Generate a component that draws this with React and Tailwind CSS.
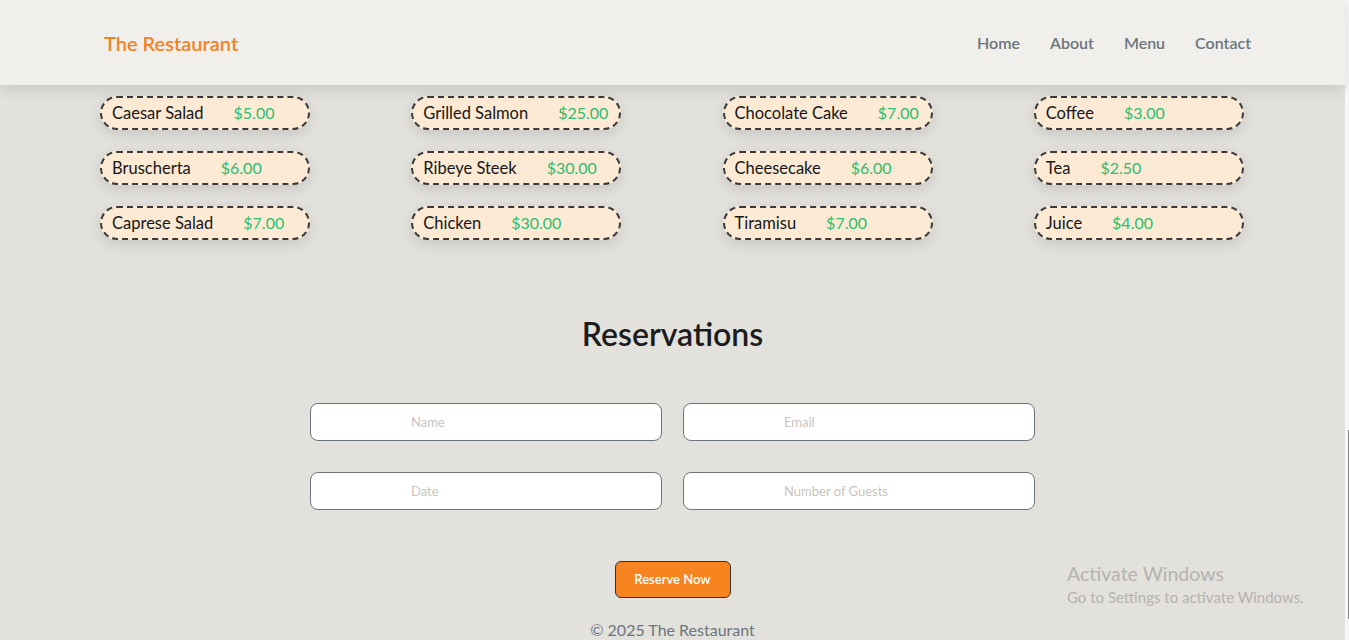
const menu = [
  [
    { name: 'Caesar Salad', price: '$5.00' },
    { name: 'Bruscherta', price: '$6.00' },
    { name: 'Caprese Salad', price: '$7.00' },
  ],
  [
    { name: 'Grilled Salmon', price: '$25.00' },
    { name: 'Ribeye Steek', price: '$30.00' },
    { name: 'Chicken', price: '$30.00' },
  ],
  [
    { name: 'Chocolate Cake', price: '$7.00' },
    { name: 'Cheesecake', price: '$6.00' },
    { name: 'Tiramisu', price: '$7.00' },
  ],
  [
    { name: 'Coffee', price: '$3.00' },
    { name: 'Tea', price: '$2.50' },
    { name: 'Juice', price: '$4.00' },
  ],
];

function MenuPill({ item }) {
  return (
    <div className="flex h-[34px] w-[210px] items-center rounded-full border-2 border-dashed border-[#3a3a3a] bg-[#fcead4] pl-[10px] shadow-[0_4px_14px_rgba(0,0,0,0.12)]">
      <span className="text-[16.5px] text-[#161616]">{item.name}</span>
      <span className="ml-[30px] text-[16px] text-[#2dbd6e]">{item.price}</span>
    </div>
  );
}

export default function App() {
  return (
    <div className="relative h-[640px] w-full overflow-hidden bg-[#e2e1dc] font-['Lato',sans-serif] pr-[4px]">
      <header className="relative z-10 flex h-[85px] items-center justify-between bg-[#f0efeb] pl-[104px] pr-[94px] shadow-[0_4px_14px_rgba(0,0,0,0.12)]">
        <span className="text-[20px] font-semibold text-[#f5821f]">The Restaurant</span>
        <nav className="flex gap-[30px] text-[16px] font-semibold text-[#6c757d]">
          <a>Home</a>
          <a>About</a>
          <a>Menu</a>
          <a>Contact</a>
        </nav>
      </header>

      <section className="mt-[11px] grid grid-cols-4 pl-[100px]">
        {menu.map((col, i) => (
          <div key={i} className="flex flex-col gap-[21px]">
            {col.map((item) => (
              <MenuPill key={item.name} item={item} />
            ))}
          </div>
        ))}
      </section>

      <section className="mt-[74px] flex flex-col items-center">
        <h2 className="text-[32px] leading-[40px] font-semibold text-[#1c1c1c]">Reservations</h2>
        <form className="mt-[49px] grid w-[725px] grid-cols-2 gap-x-[21px] gap-y-[31px]">
          {['Name', 'Email', 'Date', 'Number of Guests'].map((p) => (
            <input
              key={p}
              placeholder={p}
              className="h-[38px] rounded-[8px] border border-[#6c757d] bg-white pl-[100px] text-[13px] outline-none placeholder:text-[#c8c4c0]"
            />
          ))}
        </form>
        <button className="mt-[51px] h-[37px] w-[116px] rounded-[6px] border border-[#333] bg-[#f7851f] text-[13px] font-semibold text-white">
          Reserve Now
        </button>
        <footer className="mt-[20px] text-[16px] leading-[24px] text-[#6c757d]">© 2025 The Restaurant</footer>
      </section>

      <div className="absolute left-[1067px] top-[562px] flex flex-col text-[#b5b3af]">
        <span className="text-[19.5px] leading-[24px]">Activate Windows</span>
        <span className="text-[15px] leading-[22px]">Go to Settings to activate Windows.</span>
      </div>

      <div className="absolute right-0 top-0 h-full w-[4px] bg-[#f7f7f7]">
        <div className="ml-[3px] mt-[430px] h-[189px] w-[1px] bg-[#8a8a8a]" />
      </div>
    </div>
  );
}
